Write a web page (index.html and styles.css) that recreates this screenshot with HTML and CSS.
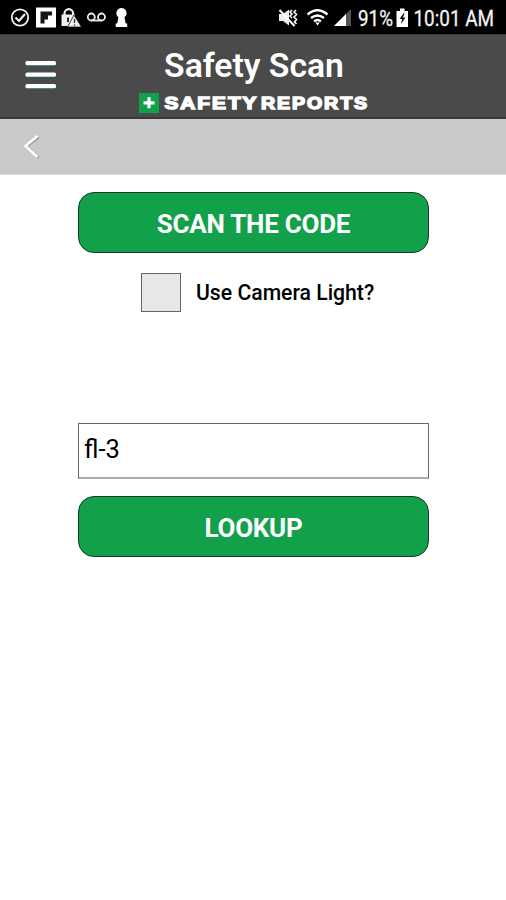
FILE: index.html
```html
<!DOCTYPE html>
<html lang="en">
<head>
<meta charset="utf-8">
<title>Safety Scan</title>
<link rel="stylesheet" href="styles.css">
</head>
<body>
<div class="status">
  <svg class="status-left" width="140" height="34" viewBox="0 0 140 34" fill="none" stroke="#eee" stroke-width="1.8">
    <circle cx="20" cy="17.5" r="8.2"/><path d="M15.500 17.500l3.500 3.500 6-7" stroke-width="2.2"/>
    <path d="M36 7.500h20v20H36z" fill="#fff" stroke="none"/>
    <path d="M40.500 11.500h11.500v4h-4v4h-3.500v4h-4z" fill="#151515" stroke="none"/>
    <path d="M64.500 16v-2.500a4.300 4.300 0 0 1 8.600 0V16" stroke-width="2.2"/>
    <path d="M61.500 14.500h13.500v11.500H61.500z" fill="#eee" stroke="none"/><path d="M68 17.500v4.500" stroke="#111"/>
    <path d="M74 15l7.500 12H67.500z" fill="#eee" stroke="#111" stroke-width=".8"/><path d="M74.500 19v4M74.500 24.500v1.200" stroke="#333" stroke-width="1.300"/>
    <circle cx="91.300" cy="17" r="3.500"/><circle cx="101.500" cy="17" r="3.500"/><path d="M91 20.500h11"/>
    <path d="M121.500 8a5.200 5.200 0 0 1 3 9.300l1.200 6.200h1.500v3.500h-11.500v-3.500h1.500l1.200-6.200a5.200 5.200 0 0 1 3.100-9.300z" fill="#fff" stroke="none"/>
  </svg>
  <svg class="status-icons" width="232" height="34" viewBox="274 0 232 34" fill="none" stroke="#fff" stroke-width="2">
    <path d="M279 14h4l6-4.500v16L283 21h-4z" fill="#eee" stroke="none"/>
    <path d="M279.500 10l15 16" stroke-width="2"/>
    <path d="M292 10l-2 2 2 2-2 2 2 2M296 10l-2 2 2.500 2.500-2.500 2.500 2.500 2.500-2 2.500 2 2" stroke-width="1.600"/>
    <path d="M307.500 14.500q10-8.500 20 0M311 18q6.500-5 13 0M314 21.300q3.500-2.600 7 0" stroke-width="2.300"/>
    <path d="M315.200 22.500h4.600l-2.300 3z" fill="#fff" stroke="none"/>
    <path d="M334 26l17-17v17z" fill="#555" stroke="none"/><path d="M334 26l12-12v12z" fill="#fff" stroke="none"/>
    <text class="status-text" x="358" y="26" textLength="35" lengthAdjust="spacingAndGlyphs">91%</text>
    <path d="M396.500 11h3.500V8.500h4.500V11h3.500v16h-11.500z" fill="#fff" stroke="none"/><path d="M403.800 13l-4.300 6h2.500l-1 5 4.500-6.500h-2.500l1.500-4.500z" fill="#111" stroke="none"/>
    <text class="status-text" x="413.500" y="26" textLength="80.500" lengthAdjust="spacingAndGlyphs">10:01 AM</text>
  </svg>
</div>
<header class="header">
  <svg class="menu" width="36" height="34" viewBox="0 0 36 34"><g fill="#245b57"><rect x="3" y="4" width="31" height="4.500"/><rect x="3" y="15.500" width="31" height="4.500"/><rect x="3" y="27" width="31" height="4.500"/></g><g fill="#fff"><rect x="2.500" y="3" width="30.500" height="4.300" rx="1.500"/><rect x="2.500" y="14.500" width="30.500" height="4.300" rx="1.500"/><rect x="2.500" y="26" width="30.500" height="4.300" rx="1.500"/></g></svg>
  <div class="heading">
    <h1>Safety Scan</h1>
    <svg class="brand" width="232" height="22" viewBox="138 92 232 22">
      <rect x="139" y="93" width="20" height="20" fill="#11a04b"/><path d="M149 97.300v11M143.500 102.800h11" stroke="#fff" stroke-width="3.200"/>
      <g class="brand-text"><text x="164.500" y="108.500" textLength="94" lengthAdjust="spacingAndGlyphs">SAFETY</text><text x="261" y="108.500" textLength="108" lengthAdjust="spacingAndGlyphs">REPORTS</text></g>
    </svg>
  </div>
</header>
<nav class="subnav"><svg width="20" height="28" viewBox="0 0 20 28" fill="none" stroke-width="2.600"><path d="M17.500 4L5.500 13.500l12 11" stroke="#819c94"/><path d="M16.500 3L4.500 13l12 11" stroke="#fff"/></svg></nav>
<main>
  <button class="button">SCAN THE CODE</button>
  <label class="option"><span class="box"></span><span class="option-text">Use Camera Light?</span></label>
  <div class="field">fl-3</div>
  <button class="button">LOOKUP</button>
</main>
</body>
</html>
```
FILE: styles.css
```css
* { box-sizing: border-box; }
body { margin: 0; width: 506px; height: 900px; background: #fff; font-family: Roboto, "Liberation Sans", sans-serif; color: #000; overflow: hidden; }
svg { display: block; flex: none; }
.status { display: flex; height: 34px; background: #000; }
.status-icons { margin-left: 134px; }
.status-text { font-size: 22.5px; fill: #f2f2f2; stroke: #f2f2f2; stroke-width: .3; }
.header { height: 85px; display: flex; background: #4a4a4a; border-top: 1px solid #3b3b3b; border-bottom: 2px solid #383838; }
.menu { margin: 23px 0 0 23px; }
.heading { width: 232px; margin-left: 79px; display: flex; flex-direction: column; align-items: center; }
h1 { margin: 11px 0 0; height: 46px; line-height: 40px; color: #fff; font-size: 33.7px; font-weight: 600; white-space: nowrap; }
.brand-text { font-family: "Liberation Sans", sans-serif; font-weight: 700; font-size: 16.5px; letter-spacing: 1.6px; fill: #fff; stroke: #fff; stroke-width: 1.4; }
.subnav { height: 56px; background: #c9c9c9; border-bottom: 1px solid #d8d8d8; padding: 14px 0 0 21px; }
main { width: 351px; margin: 17px 0 0 78px; display: flex; flex-direction: column; }
.button { width: 351px; height: 61px; padding: 2px 0 0; border: 1px solid #133c22; border-radius: 16px; background: #13a04b; color: #fff; font: 700 26px/58px Roboto, sans-serif; letter-spacing: -.25px; }
.option { display: flex; height: 39px; margin: 20px 0 111px 63px; }
.box { width: 40px; height: 39px; border: 1px solid #666; background: #e7e7e7; }
.option-text { margin-left: 15px; font-size: 21.2px; font-weight: 500; line-height: 40px; white-space: nowrap; }
.field { height: 56px; margin-bottom: 17px; border: 1px solid #666; border-bottom: 2px solid #aaa; padding-left: 5px; font-size: 25.5px; line-height: 50px; }
```
